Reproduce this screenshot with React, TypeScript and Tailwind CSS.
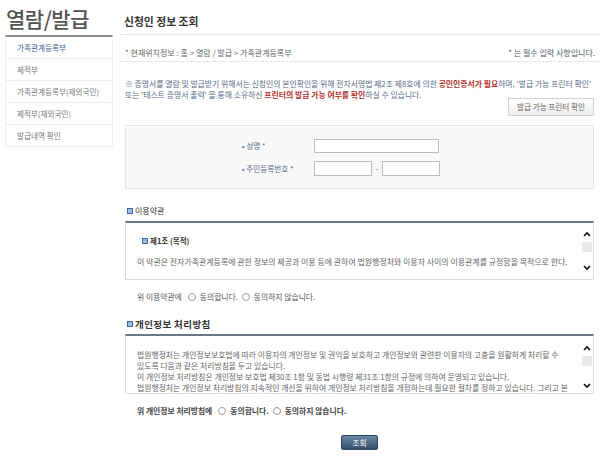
import React from "react";

const Icon = () => (
  <span className="inline-block w-[6px] h-[6px] border border-[#3f6aa0] bg-[#9fbde0] shrink-0" />
);

const Radio = () => (
  <span className="inline-block w-[8px] h-[8px] rounded-full border border-[#9a9a9a] bg-white shrink-0" />
);

const Chevron = ({ up }: { up?: boolean }) => (
  <svg width="8" height="6" viewBox="0 0 8 6" className="block">
    {up ? (
      <path d="M1 5 L4 2 L7 5" fill="none" stroke="#111" strokeWidth="1.6" />
    ) : (
      <path d="M1 1 L4 4 L7 1" fill="none" stroke="#111" strokeWidth="1.6" />
    )}
  </svg>
);

const Scrollbar = ({ thumbTop, upTop, downBottom }: { thumbTop: string; upTop: string; downBottom: string }) => (
  <div className="w-[10px] shrink-0 mr-[1px] flex flex-col items-center">
    <div className={upTop}>
      <Chevron up />
    </div>
    <div className={`w-[10px] h-[10px] bg-[#e9e9e9] ${thumbTop}`} />
    <div className="flex-1" />
    <div className={downBottom}>
      <Chevron />
    </div>
  </div>
);

export default function App() {
  const menu = ["가족관계등록부", "제적부", "가족관계등록부(재외국민)", "제적부(재외국민)", "발급내역 확인"];
  return (
    <div className="w-[600px] h-[459px] bg-white flex overflow-hidden font-['Noto_Sans_CJK_KR','Noto_Sans',sans-serif] text-[#666]">
      <aside className="w-[113px] shrink-0 pl-[5px]">
        <div className="h-[35px] pt-[2px] pl-[1px] flex items-center text-[21px] font-medium leading-none text-[#555] tracking-[-0.5px]">
          열람/발급
        </div>
        <div className="border-t-2 border-[#8d8d8d] border-x border-x-[#f0f0f0]">
          {menu.map((m, i) => (
            <div
              key={m}
              className={`h-[22px] border-b border-[#ececec] pl-[11px] flex items-center text-[7.6px] ${
                i === 0 ? "text-[#3c6491]" : "text-[#777]"
              }`}
            >
              {m}
            </div>
          ))}
        </div>
      </aside>

      <main className="flex-1 pl-[7px] flex flex-col">
        <div className="h-[35px] pt-[8px] pl-[4px] flex items-center text-[10.8px] font-bold text-[#333] border-b border-dotted border-[#d6d6d6]">
          신청인 정보 조회
        </div>
        <div className="h-[27px] px-[5px] pb-[4px] flex items-end justify-between text-[8px] leading-none border-b border-dotted border-[#d6d6d6]">
          <span className="text-[#666]">* 현재위치정보 : 홈 &gt; 열람 / 발급 &gt; 가족관계등록부</span>
          <span className="text-[#4d5a68]">* 는 필수 입력 사항입니다.</span>
        </div>

        <div className="px-[5px] pr-[6px]">
          <div className="mt-[16px] text-[7.85px] leading-[11px] text-[#5a6a84] whitespace-nowrap">
            <div>
              ※ 증명서를 열람 및 발급받기 위해서는 신청인의 본인확인을 위해 전자서명법 제2조 제8호에 의한{" "}
              <b className="text-[#b3302c]">공인인증서가 필요</b>하며, '발급 가능 프린터 확인'
            </div>
            <div>
              또는 '테스트 증명서 출력' 을 통해 소유하신{" "}
              <b className="text-[#b3302c]">프린터의 발급 가능 여부를 확인</b>하실 수 있습니다.
            </div>
          </div>
          <div className="flex justify-end mt-[-2px]">
            <button className="h-[18px] w-[86px] border border-[#d2d2d2] bg-gradient-to-b from-white to-[#eeeeee] text-[7.6px] text-[#666] flex items-center justify-center whitespace-nowrap">
              발급 가능 프린터 확인
            </button>
          </div>

          <div className="mt-[9px] h-[64px] border border-[#e4e4e4] bg-[#f9f9f9] pt-[13px] pl-[116px] flex flex-col gap-[8px] text-[7.6px] text-[#5a6a84]">
            <div className="flex items-center">
              <span className="w-[72px]">• 성명 *</span>
              <span className="w-[125px] h-[14px] border border-[#bdbdbd] bg-white" />
            </div>
            <div className="flex items-center">
              <span className="w-[72px]">• 주민등록번호 *</span>
              <span className="w-[58px] h-[15px] border border-[#bdbdbd] bg-white" />
              <span className="w-[10px] text-center">-</span>
              <span className="w-[58px] h-[15px] border border-[#bdbdbd] bg-white" />
            </div>
          </div>

          <div className="mt-[16px] h-[12px] pl-[2px] flex items-center gap-[2px] text-[8px] text-[#333]">
            <Icon />
            <span>이용약관</span>
          </div>
          <div className="mt-[4px] h-[59px] border-t-2 border-t-[#6b7886] border-x border-b border-[#dcdcdc] flex">
            <div className="flex-1 overflow-hidden">
              <div className="mt-[13px] pl-[16px] flex items-center gap-[2px] text-[7.5px] font-bold text-[#333] leading-[10px]">
                <Icon />
                <span>제1조 (목적)</span>
              </div>
              <div className="mt-[11px] pl-[11px] text-[7.95px] leading-[10px] text-[#666] whitespace-nowrap">
                이 약관은 전자가족관계등록에 관한 정보의 제공과 이용 등에 관하여 법원행정처와 이용자 사이의 이용관계를 규정함을 목적으로 한다.
              </div>
            </div>
            <Scrollbar upTop="mt-[8px]" thumbTop="mt-[5px]" downBottom="mb-[8px]" />
          </div>

          <div className="mt-[11px] h-[12px] pl-[12px] flex items-center gap-[4px] text-[7.8px] text-[#555]">
            <span className="mr-[2px]">위 이용약관에</span>
            <Radio />
            <span>동의합니다.</span>
            <Radio />
            <span>동의하지 않습니다.</span>
          </div>

          <div className="mt-[15px] h-[12px] pl-[2px] flex items-center gap-[2px] text-[9.5px] font-bold text-[#333] tracking-[0.4px]">
            <Icon />
            <span>개인정보 처리방침</span>
          </div>
          <div className="mt-[4px] h-[60px] border-t-2 border-t-[#6b7886] border-x border-b border-[#dcdcdc] flex">
            <div className="flex-1 overflow-hidden pl-[11px] pt-[13px] text-[7.85px] leading-[11px] text-[#666] whitespace-nowrap">
              <div>법원행정처는 개인정보보호법에 따라 이용자의 개인정보 및 권익을 보호하고 개인정보와 관련한 이용자의 고충을 원활하게 처리할 수</div>
              <div>있도록 다음과 같은 처리방침을 두고 있습니다.</div>
              <div>이 개인정보 처리방침은 개인정보 보호법 제30조 1항 및 동법 시행령 제31조 1항의 규정에 의하여 운영되고 있습니다.</div>
              <div>법원행정처는 개인정보 처리방침의 지속적인 개선을 위하여 개인정보 처리방침을 개정하는데 필요한 절차를 정하고 있습니다. 그리고 본</div>
            </div>
            <Scrollbar upTop="mt-[9px]" thumbTop="mt-[5px]" downBottom="mb-[4px]" />
          </div>

          <div className="mt-[11px] h-[12px] pl-[12px] flex items-center gap-[4px] text-[7.8px] font-bold text-[#444]">
            <span className="mr-[2px]">위 개인정보 처리방침에</span>
            <Radio />
            <span>동의합니다.</span>
            <Radio />
            <span>동의하지 않습니다.</span>
          </div>

          <div className="mt-[18px] flex justify-center">
            <button className="w-[37px] h-[15px] rounded-[2px] border border-[#2e465f] bg-gradient-to-b from-[#6a87a4] to-[#34506c] text-white text-[7.8px] flex items-center justify-center">
              조회
            </button>
          </div>
        </div>
      </main>
    </div>
  );
}
